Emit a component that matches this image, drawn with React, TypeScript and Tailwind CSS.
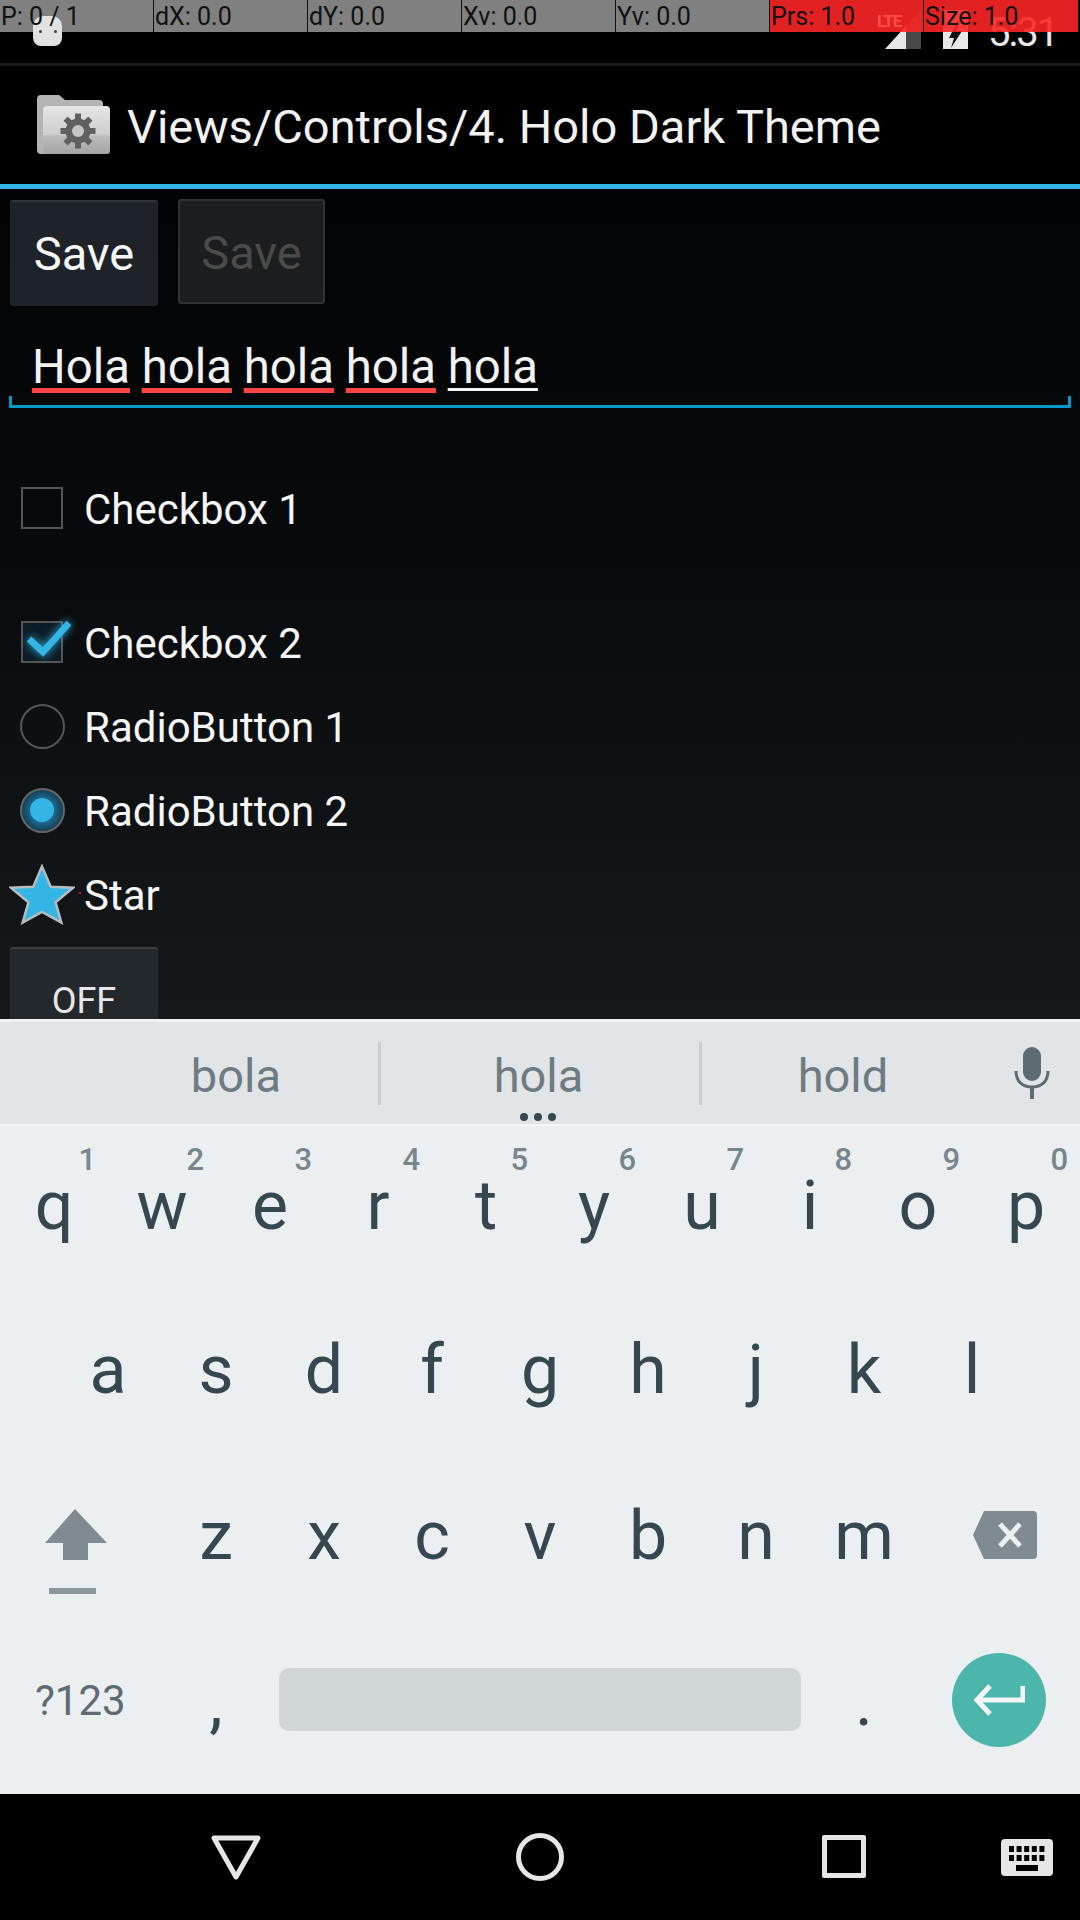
const strip = [
  { label: "P: 0 / 1", red: false },
  { label: "dX: 0.0", red: false },
  { label: "dY: 0.0", red: false },
  { label: "Xv: 0.0", red: false },
  { label: "Yv: 0.0", red: false },
  { label: "Prs: 1.0", red: true },
  { label: "Size: 1.0", red: true },
];

const row1 = [
  ["q", "1"],
  ["w", "2"],
  ["e", "3"],
  ["r", "4"],
  ["t", "5"],
  ["y", "6"],
  ["u", "7"],
  ["i", "8"],
  ["o", "9"],
  ["p", "0"],
];
const row2 = ["a", "s", "d", "f", "g", "h", "j", "k", "l"];
const row3 = ["z", "x", "c", "v", "b", "n", "m"];

function PointerStrip() {
  return (
    <div className="absolute top-0 left-0 w-full h-[32px] flex z-10">
      {strip.map((s, i) => (
        <div
          key={s.label}
          className={`w-[154px] h-full relative text-[25px] leading-[34px] pl-[1px] text-[#111] whitespace-nowrap ${
            i < 6 ? "border-r border-[#111]" : ""
          } ${s.red ? "bg-[#fb2626]/90" : "bg-[#808080]"}`}
        >
          {i === 0 && (
            <div className="absolute left-[33px] top-[16px] w-[29px] h-[30px] rounded-t-[10px] rounded-b-[8px] bg-[#e2e2e2]">
              <div className="absolute left-[6px] top-[14px] w-[3px] h-[3px] rounded-full bg-[#444]" />
              <div className="absolute left-[21px] top-[14px] w-[3px] h-[3px] rounded-full bg-[#444]" />
            </div>
          )}
          {i === 5 && (
            <span className="absolute left-[107px] top-[11px] text-[17px] leading-[20px] font-bold tracking-[-1px] text-[#ff4a4a]">
              LTE
            </span>
          )}
          <span className="relative">{s.label}</span>
        </div>
      ))}
    </div>
  );
}

function StatusBar() {
  return (
    <div className="h-[66px] bg-black border-b-[3px] border-[#1a1a1a] flex items-start justify-end pr-[25px] pt-[14px]">
      <svg width="36" height="39" viewBox="0 0 36 39" className="mt-[-4px]">
        <path d="M0 39 L21 16 V39 Z" fill="#e8e8e8" />
        <path d="M21 16 L36 0 V39 H21 Z" fill="#484848" />
      </svg>
      <svg width="25" height="39" viewBox="0 0 25 39" className="ml-[22px] mt-[-4px]">
        <path d="M0 0 H25 V39 H0 Z" fill="#e8e8e8" />
        <path d="M14 12 L6 28 H11 L8 38 L19 21 H13 L17 12 Z" fill="#111" />
      </svg>
      <span className="ml-[20px] w-[67px] text-[40px] leading-[44px] tracking-[-2px] text-[#e8e8e8] whitespace-nowrap mt-[-3px]">
        5:31
      </span>
    </div>
  );
}

function FolderIcon() {
  return (
    <svg width="74" height="62" viewBox="0 0 74 62">
      <defs>
        <linearGradient id="folderFront" x1="0" y1="0" x2="0" y2="1">
          <stop offset="0" stopColor="#e6e6e6" />
          <stop offset="0.6" stopColor="#cdcdcd" />
          <stop offset="0.62" stopColor="#bdbdbd" />
          <stop offset="1" stopColor="#a4a4a4" />
        </linearGradient>
      </defs>
      <path d="M0 5 Q0 1 4 1 H22 L28 6 H62 Q66 6 66 10 V40 H10 V60 H4 Q0 60 0 56 Z" fill="#b4b4b4" />
      <path d="M6 16 Q6 12 10 12 H69 Q73 12 73 16 V57 Q73 60 70 60 H9 Q6 60 6 57 Z" fill="url(#folderFront)" />
      <g transform="translate(41 37)">
        <circle r="12.5" fill="#606060" />
        {[0, 45, 90, 135, 180, 225, 270, 315].map((a) => (
          <rect key={a} x="-3" y="-17.5" width="6" height="8" fill="#606060" transform={`rotate(${a})`} />
        ))}
        <circle r="6" fill="#c6c6c6" />
      </g>
    </svg>
  );
}

function ActionBar() {
  return (
    <div className="h-[123px] bg-black border-b-[5px] border-[#33b5e5] flex items-center pl-[37px]">
      <FolderIcon />
      <span className="ml-[16px] pt-[4px] text-[47px] text-[#f2f2f2] whitespace-nowrap">
        Views/Controls/4. Holo Dark Theme
      </span>
    </div>
  );
}

function Word({ children, last }: { children: string; last?: boolean }) {
  return (
    <span
      className={
        last
          ? "underline decoration-[#f5f5f5] decoration-[3px] underline-offset-[5px]"
          : "underline decoration-[#ff4444] decoration-[5px] underline-offset-[5px]"
      }
    >
      {children}
    </span>
  );
}

function Row({ icon, label, className }: { icon: React.ReactNode; label: string; className?: string }) {
  return (
    <div className={`h-[84px] flex items-center ${className ?? ""}`}>
      <div className="w-[84px] h-full flex items-center justify-center relative">{icon}</div>
      <span className="pt-[2px] text-[42px] text-[#f5f5f5] whitespace-nowrap">{label}</span>
    </div>
  );
}

function Checked() {
  return (
    <div className="w-[42px] h-[42px] border-2 border-[#555] relative bg-[#0c1c26]">
      <svg
        width="56"
        height="40"
        viewBox="0 0 56 40"
        className="absolute left-[-2px] top-[-2px] overflow-visible drop-shadow-[0_0_4px_#33b5e5]"
      >
        <path d="M8 18 L22 31 L48 2" fill="none" stroke="#33b5e5" strokeWidth="6.5" />
      </svg>
    </div>
  );
}

function Content() {
  return (
    <div className="h-[830px] overflow-hidden bg-gradient-to-b from-[#020304] to-[#16191c]">
      <div className="flex items-start pt-[11px] pl-[10px]">
        <div className="w-[148px] h-[106px] rounded-[3px] bg-[#1d2328] border-t-2 border-[#30353a] flex items-center justify-center text-[47px] text-[#f5f5f5]">
          Save
        </div>
        <div className="ml-[20px] mt-[-1px] pt-[3px] w-[147px] h-[105px] rounded-[3px] bg-[#1b1d1e] border-2 border-[#333] flex items-center justify-center text-[47px] text-[#4a4a4a]">
          Save
        </div>
      </div>
      <div className="mt-[31px] pl-[32px] h-[59px] text-[47.3px] leading-[60px] text-[#f2f2f2] whitespace-nowrap">
        <Word>Hola</Word> <Word>hola</Word> <Word>hola</Word> <Word>hola</Word> <Word last>hola</Word>
      </div>
      <div className="mx-[9px] h-[12px] border-b-[3px] border-x-[3px] border-[#0099cc]" />
      <Row
        className="mt-[58px]"
        label="Checkbox 1"
        icon={<div className="w-[42px] h-[42px] border-2 border-[#555]" />}
      />
      <Row className="mt-[50px]" label="Checkbox 2" icon={<Checked />} />
      <Row label="RadioButton 1" icon={<div className="w-[45px] h-[45px] rounded-full border-2 border-[#555]" />} />
      <Row
        label="RadioButton 2"
        icon={
          <div className="w-[45px] h-[45px] rounded-full border-2 border-[#666] bg-[radial-gradient(circle,#1c6a90_40%,#0e1a22_100%)] flex items-center justify-center">
            <div className="w-[24px] h-[24px] rounded-full bg-[#33b5e5]" />
          </div>
        }
      />
      <Row
        label="Star"
        icon={
          <>
            <svg width="66" height="61" viewBox="0 0 68 62">
              <path
                d="M34 2 L43 23 L66 24 L48 39 L54 60 L34 49 L14 60 L20 39 L2 24 L25 23 Z"
                fill="#33b5e5"
                stroke="#b9bcbe"
                strokeWidth="2.5"
              />
            </svg>
            <div className="absolute left-[79px] top-[40px] w-[2px] h-[2px] bg-[#e01010]" />
          </>
        }
      />
      <div className="ml-[10px] mt-[11px] w-[148px] h-[100px] rounded-[3px] bg-[#23282d] border-t-2 border-[#3c4146] flex justify-center pt-[32px] text-[36px] leading-[40px] text-[#e8e8e8]">
        OFF
      </div>
    </div>
  );
}

function SuggestionStrip() {
  return (
    <div className="h-[107px] border-t-[3px] border-b-[2px] border-t-[#f0f2f3] border-b-[#f4f6f7] bg-[#e1e5e8] flex items-start relative text-[47px] leading-[60px] text-[#6f7b82]">
      <div className="w-[378px] flex justify-end pr-[97px] pt-[24px]">bola</div>
      <div className="w-[3px] h-[63px] bg-[#c8cdd0] mt-[20px]" />
      <div className="w-[318px] flex justify-center pr-[3px] pt-[24px]">hola</div>
      <div className="w-[3px] h-[63px] bg-[#c8cdd0] mt-[20px]" />
      <div className="w-[282px] flex justify-center pt-[24px]">hold</div>
      <svg width="38" height="52" viewBox="0 0 38 52" className="absolute left-[1013px] top-[25px]" fill="#5f6b72">
        <rect x="10" y="0" width="18" height="34" rx="9" />
        <path d="M3 24 C3 35 10 40 19 40 C28 40 35 35 35 24" fill="none" stroke="#5f6b72" strokeWidth="3" />
        <rect x="17" y="40" width="4" height="12" />
      </svg>
      <div className="absolute left-[520px] top-[91px] flex gap-[6px]">
        <div className="w-[8px] h-[8px] rounded-full bg-[#37474f]" />
        <div className="w-[8px] h-[8px] rounded-full bg-[#37474f]" />
        <div className="w-[8px] h-[8px] rounded-full bg-[#37474f]" />
      </div>
    </div>
  );
}

function Key({ ch, hint }: { ch: string; hint?: string }) {
  return (
    <div className="w-[108px] h-full relative flex justify-center pt-[43px] text-[68px] leading-[70px] text-[#37474f]">
      {ch}
      {hint && (
        <span className="absolute right-[12px] top-[16px] text-[31px] leading-[32px] font-medium text-[#78858c]">
          {hint}
        </span>
      )}
    </div>
  );
}

function Keyboard() {
  return (
    <div className="h-[668px] pt-[2px] bg-[#eceff1] flex flex-col">
      <div className="h-[164px] flex">
        {row1.map(([c, h]) => (
          <Key key={c} ch={c} hint={h} />
        ))}
      </div>
      <div className="h-[166px] flex pl-[54px]">
        {row2.map((c) => (
          <Key key={c} ch={c} />
        ))}
      </div>
      <div className="h-[166px] flex pl-[162px] relative">
        {row3.map((c) => (
          <Key key={c} ch={c} />
        ))}
        <svg width="64" height="86" viewBox="0 0 64 86" className="absolute left-[44px] top-[51px]">
          <path d="M31 0 L63 34 H44 V51 H19 V34 H1 Z" fill="#7f8b90" />
          <rect x="5" y="79" width="47" height="6" fill="#8a979d" />
        </svg>
        <svg width="64" height="48" viewBox="0 0 64 48" className="absolute left-[973px] top-[53px]">
          <path d="M11 0 H60 Q64 0 64 4 V44 Q64 48 60 48 H11 L0 24 Z" fill="#7f8b90" />
          <path d="M27 13 L47 35 M47 13 L27 35" stroke="#eceff1" strokeWidth="5" />
        </svg>
      </div>
      <div className="flex-1 relative">
        <span className="absolute left-[35px] top-[53px] text-[42px] leading-[48px] text-[#5f6b72]">?123</span>
        <span className="absolute left-[162px] w-[108px] text-center top-[43px] text-[68px] leading-[70px] text-[#37474f]">
          ,
        </span>
        <div className="absolute left-[279px] top-[44px] w-[522px] h-[63px] rounded-[10px] bg-[#d0d5d8]" />
        <span className="absolute left-[810px] w-[108px] text-center top-[43px] text-[68px] leading-[70px] text-[#37474f]">
          .
        </span>
        <div className="absolute left-[952px] top-[29px] w-[94px] h-[94px] rounded-full bg-[#4db6ac] flex items-center justify-center">
          <svg width="52" height="32" viewBox="0 0 52 32" fill="none" stroke="#f4f6f7" strokeWidth="5">
            <path d="M50 2 V16 H5" />
            <path d="M17 2 L4 16 L17 30" />
          </svg>
        </div>
      </div>
    </div>
  );
}

function NavBar() {
  return (
    <div className="h-[126px] bg-black relative">
      <svg
        width="52"
        height="46"
        viewBox="0 0 52 46"
        className="absolute left-[210px] top-[41px]"
        fill="none"
        stroke="#e6e6e6"
        strokeWidth="5"
      >
        <path d="M4 3 H48 L26 42 Z" strokeLinejoin="round" />
      </svg>
      <div className="absolute left-[516px] top-[39px] w-[48px] h-[48px] rounded-full border-[5px] border-[#e6e6e6]" />
      <div className="absolute left-[822px] top-[41px] w-[44px] h-[43px] rounded-[2px] border-[5px] border-[#e6e6e6]" />
      <svg width="52" height="37" viewBox="0 0 52 37" className="absolute left-[1001px] top-[45px]">
        <rect width="52" height="37" rx="4" fill="#e6e6e6" />
        {[0, 1, 2, 3, 4].map((i) => (
          <g key={i}>
            <rect x={8 + i * 7.6} y="7" width="5" height="6" fill="#000" />
            <rect x={8 + i * 7.6} y="16" width="5" height="6" fill="#000" />
          </g>
        ))}
        <rect x="15" y="26" width="22" height="6" fill="#000" />
      </svg>
    </div>
  );
}

export default function App() {
  return (
    <div className="w-[1080px] h-[1920px] relative overflow-hidden bg-black font-['Roboto',sans-serif]">
      <PointerStrip />
      <StatusBar />
      <ActionBar />
      <Content />
      <SuggestionStrip />
      <Keyboard />
      <NavBar />
    </div>
  );
}
